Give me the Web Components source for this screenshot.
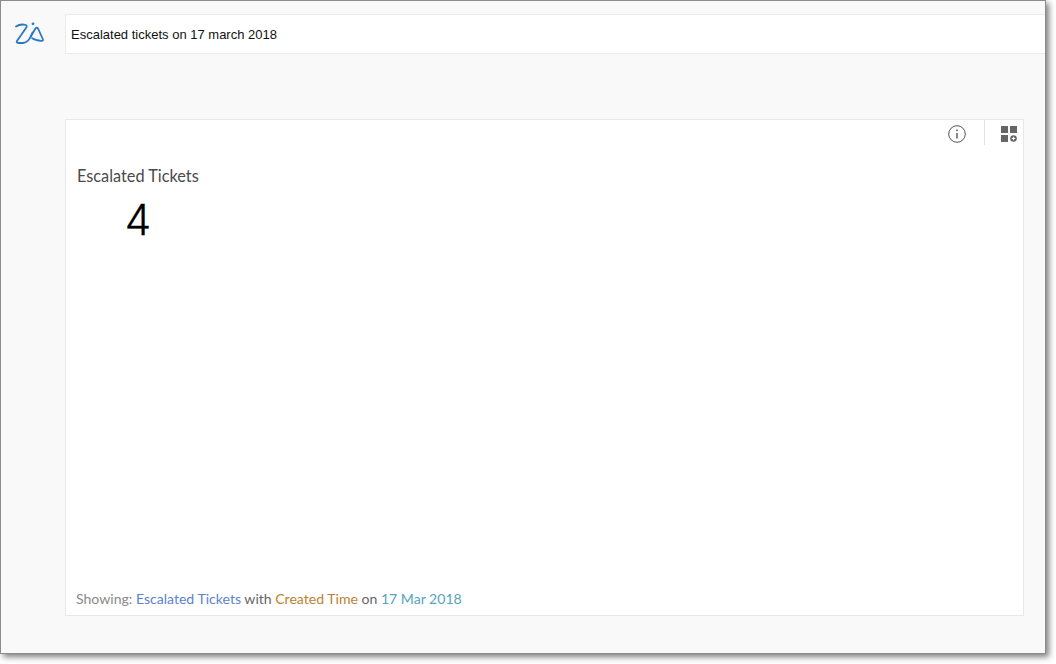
<!DOCTYPE html>
<html>
<head>
<meta charset="utf-8">
<style>
    html, body { margin: 0; background: #fff; }
    body { height: 664px; overflow: hidden; }
</style>
</head>
<body>
<app-window>
    <zia-logo slot="logo"></zia-logo>
    <ask-bar slot="bar">Escalated tickets on 17 march 2018</ask-bar>
    <report-card slot="card">
        <span slot="title">Escalated Tickets</span>
        <span slot="value">4</span>
        <span slot="footer">Showing: <b style="font-weight:400;color:#5c83cc">Escalated Tickets</b> <i style="font-style:normal;color:#666">with</i> <b style="font-weight:400;color:#bd8231">Created Time</b> <i style="font-style:normal;color:#666">on</i> <b style="font-weight:400;color:#55a5bd">17 Mar 2018</b></span>
    </report-card>
</app-window>
<script>
class AppWindow extends HTMLElement {
    constructor() {
        super();
        this.attachShadow({ mode: 'open' }).innerHTML = `
        <style>
            :host {
                display: grid;
                grid-template-columns: 64px 1fr;
                grid-template-rows: 40px 1fr;
                row-gap: 65px;
                box-sizing: border-box;
                width: 1046px;
                height: 654px;
                padding: 13px 0 37px 0;
                background: #f9f9f9;
                border: 1px solid #8b8b8b;
                box-shadow: 3px 3px 6px rgba(0, 0, 0, 0.5);
            }
            .card { padding-right: 21px; }
        </style>
        <div class="logo"><slot name="logo"></slot></div>
        <div class="bar"><slot name="bar"></slot></div>
        <div></div>
        <div class="card"><slot name="card"></slot></div>`;
    }
}

class ZiaLogo extends HTMLElement {
    constructor() {
        super();
        this.attachShadow({ mode: 'open' }).innerHTML = `
        <style>
            :host { display: flex; justify-content: flex-start; padding: 8px 0 0 14px; }
            svg { display: block; }
        </style>
        <svg width="30" height="23" viewBox="0 0 30 23" fill="none" stroke="#2a78c2" stroke-width="1.800" stroke-linecap="round" stroke-linejoin="round">
            <path d="M1 4.500C3.500 2.800 8 2.200 10.800 3c1.200.4 1.100 1.400.5 2.500L2 19c-.7 1.400 0 2 1.400 2H8c4 0 7.500-5 9.500-10.500"/>
            <path d="M15.500 15l5-8.500c.8-1.300 1.800-1.300 2.500 0L27.800 17c.6 1.300 0 2-1.300 1.900-3.500-.3-7-1-9.300-2.600"/>
            <circle cx="18" cy="1.800" r="1.400" fill="#2a78c2" stroke="none"/>
        </svg>`;
    }
}

class AskBar extends HTMLElement {
    constructor() {
        super();
        this.attachShadow({ mode: 'open' }).innerHTML = `
        <style>
            :host {
                display: flex;
                align-items: center;
                box-sizing: border-box;
                height: 40px;
                padding-left: 5px;
                background: #fff;
                border: 1px solid #ebebeb;
                border-right: none;
                font: 13px "Liberation Sans", Arial, sans-serif;
                color: #111;
            }
        </style>
        <slot></slot>`;
    }
}

class ReportCard extends HTMLElement {
    constructor() {
        super();
        this.attachShadow({ mode: 'open' }).innerHTML = `
        <style>
            :host {
                display: flex;
                flex-direction: column;
                box-sizing: border-box;
                height: 100%;
                background: #fff;
                border: 1px solid #e8e8e8;
                font-family: Lato, "Open Sans", sans-serif;
            }
            .tools {
                display: flex;
                justify-content: flex-end;
                height: 25px;
            }
            .tool {
                display: flex;
                align-items: center;
                justify-content: center;
                padding-top: 3px;
                box-sizing: border-box;
            }
            .info { width: 38px; padding-right: 16px; }
            .add { width: 39px; padding-left: 10px; border-left: 1px solid #e3e3e3; }
            .title {
                margin: 22px 0 0 11px;
                font-size: 16.300px;
                line-height: 18px;
                color: #4a4a4a;
            }
            .value {
                width: 122px;
                margin: 13px 0 0 11px;
                text-align: center;
                font: 300 42px/44px Inter, "Liberation Sans", sans-serif;
                -webkit-text-stroke: 0.3px #000;
                color: #000;
            }
            .footer {
                margin: auto 0 8px 10px;
                font-size: 14.070px;
                line-height: 17px;
                color: #8a8a8a;
            }
        </style>
        <div class="tools">
            <div class="tool info">
                <svg width="18" height="18" viewBox="0 0 18 18" fill="none" stroke="#555" stroke-width="1">
                    <circle cx="9" cy="9" r="8.300"/>
                    <path d="M9 8v5.500" stroke-width="1.400"/>
                    <circle cx="9" cy="5.300" r="0.900" fill="#555" stroke="none"/>
                </svg>
            </div>
            <div class="tool add">
                <svg width="16" height="16" viewBox="0 0 16 16">
                    <rect x="0" y="0" width="7" height="7" fill="#666"/>
                    <rect x="9" y="0" width="7" height="7" fill="#666"/>
                    <rect x="0" y="9" width="7" height="7" fill="#666"/>
                    <circle cx="12.500" cy="12.500" r="3.300" fill="#666"/>
                    <path d="M10.800 12.500h3.400M12.500 10.800v3.400" stroke="#fff" stroke-width="1"/>
                </svg>
            </div>
        </div>
        <div class="title"><slot name="title"></slot></div>
        <div class="value"><slot name="value"></slot></div>
        <div class="footer"><slot name="footer"></slot></div>`;
    }
}

customElements.define('app-window', AppWindow);
customElements.define('zia-logo', ZiaLogo);
customElements.define('ask-bar', AskBar);
customElements.define('report-card', ReportCard);
</script>
</body>
</html>
